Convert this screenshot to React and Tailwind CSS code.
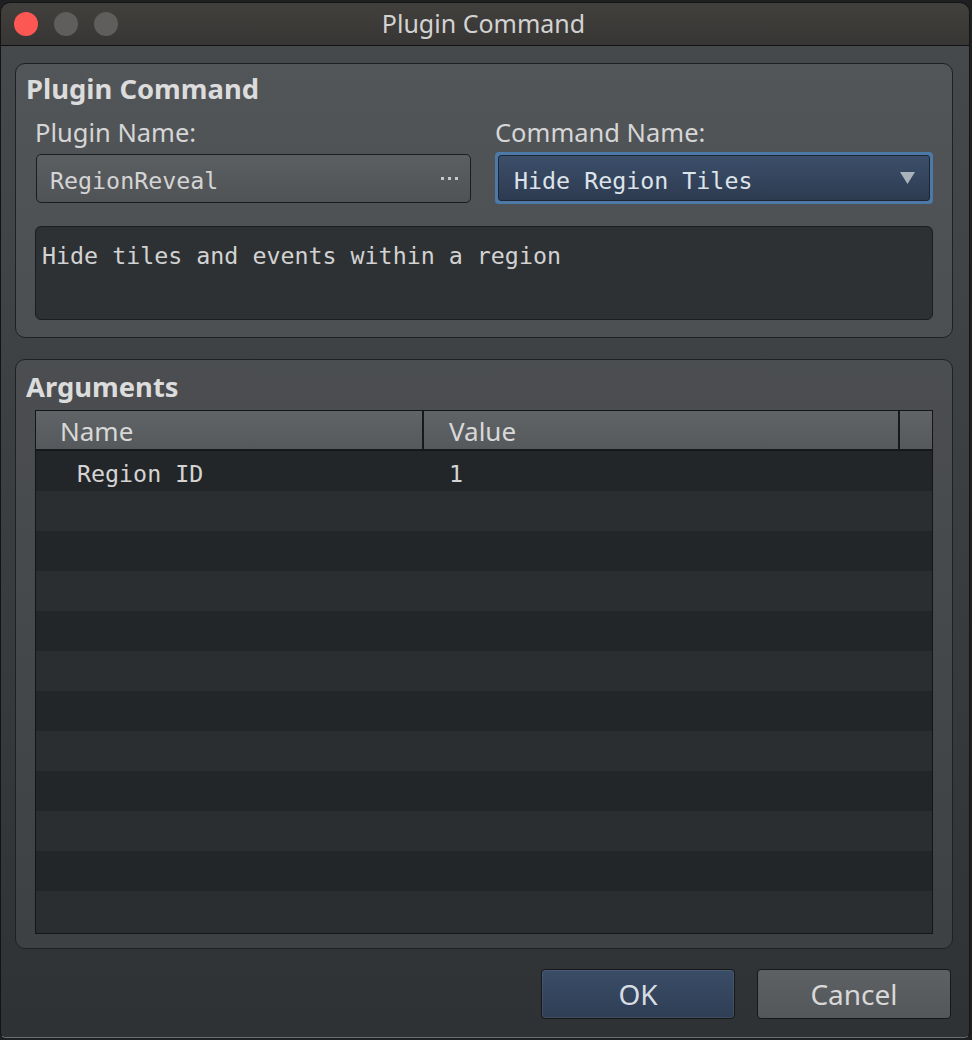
export default function App() {
  const sans = { fontFamily: '"Noto Sans", "Open Sans", sans-serif' };
  const mono = { fontFamily: '"DejaVu Sans Mono", "Liberation Mono", monospace' };
  const rows = Array.from({ length: 12 });
  return (
    <div className="w-[972px] h-[1040px] bg-[#1f2022] pt-[2px] overflow-hidden" style={sans}>
      <div className="w-[970px] h-[1036px] rounded-t-[10px] rounded-b-[6px] border border-[#141414] border-b-[#6a6d70] flex flex-col overflow-hidden">
        {/* Title bar */}
        <div className="relative h-[43px] shrink-0 bg-gradient-to-b from-[#42403d] to-[#383634] border-b border-[#111] flex items-center justify-center">
          <div className="absolute left-[13px] top-[9px] flex gap-[16px]">
            <div className="w-[24px] h-[24px] rounded-full bg-[#fc5753]" />
            <div className="w-[24px] h-[24px] rounded-full bg-[#5f5e5c]" />
            <div className="w-[24px] h-[24px] rounded-full bg-[#5f5e5c]" />
          </div>
          <span className="text-[25px] text-[#d2d2d2] leading-none -mt-[1px] -ml-[3px]">Plugin Command</span>
        </div>
        {/* Body */}
        <div className="flex-1 bg-gradient-to-b from-[#46494c] to-[#2f3235] pl-[14px] pr-[16px] pt-[17px] flex flex-col">
          {/* Group 1 */}
          <div className="h-[275px] rounded-[10px] border border-[#1e2022] bg-white/[0.07] flex flex-col">
            <div className="pl-[10px] pt-[10px] h-[30px] box-content text-[27.4px] font-bold leading-[30px] text-[#dcdcdc]">Plugin Command</div>
            <div className="px-[19px] grid grid-cols-[437px_438px] gap-x-[23px] mt-[15px]">
              <div className="h-[26px] leading-[26px] text-[25.5px] text-[#d6d6d6]">Plugin Name:</div>
              <div className="h-[26px] leading-[26px] text-[25.5px] text-[#d6d6d6]">Command Name:</div>
              <div className="h-[52px] mt-[7px] flex items-center">
                <div className="ml-[1px] w-[435px] h-[49px] rounded-[5px] border border-[#1a1c1e] bg-gradient-to-b from-[#5c5f62] to-[#505356] flex items-center pl-[13px] pr-[12px]">
                  <span className="flex-1 text-[23.3px] text-[#d4d4d4] leading-none pt-[5px]" style={mono}>RegionReveal</span>
                  <span className="flex gap-[4px] items-center">
                    <span className="w-[3px] h-[3px] bg-[#c8c8c8]" />
                    <span className="w-[3px] h-[3px] bg-[#c8c8c8]" />
                    <span className="w-[3px] h-[3px] bg-[#c8c8c8]" />
                  </span>
                </div>
              </div>
              <div className="h-[52px] mt-[7px] rounded-[4px] bg-[#4d79a9] p-[3px]">
                <div className="w-full h-full rounded-[3px] border border-[#1d2633] bg-gradient-to-b from-[#3c4f6a] to-[#2d3b50] flex items-center pl-[15px] pr-[14px]">
                  <span className="flex-1 text-[23.3px] text-[#dde3ea] leading-none pt-[5px]" style={mono}>Hide Region Tiles</span>
                  <svg width="15" height="12" viewBox="0 0 15 12">
                    <polygon points="0,0 15,0 7.5,12" fill="#aab2bc" />
                  </svg>
                </div>
              </div>
            </div>
            <div className="mx-[19px] mt-[22px] h-[94px] rounded-[6px] border border-[#1b1d1f] bg-[#2e3134] pl-[6px] pt-[15px]">
              <div className="text-[23.3px] leading-[28px] text-[#d2d2d2]" style={mono}>Hide tiles and events within a region</div>
            </div>
          </div>
          {/* Group 2 */}
          <div className="mt-[21px] h-[590px] rounded-[10px] border border-[#1e2022] bg-white/[0.065] flex flex-col">
            <div className="pl-[10px] pt-[12px] h-[30px] box-content text-[27.4px] font-bold leading-[30px] text-[#dcdcdc]">Arguments</div>
            <div className="mx-[19px] mt-[8px] h-[524px] border border-[#131517] bg-[#2b2e31] flex flex-col overflow-hidden">
              <div className="h-[40px] shrink-0 flex bg-gradient-to-b from-[#606467] to-[#56595c] border-b-[2px] border-[#16181a] text-[26px] text-[#d8d8d8]">
                <div className="w-[388px] border-r-[2px] border-[#16181a] pl-[24px] leading-[40px]">Name</div>
                <div className="w-[476px] border-r-[2px] border-[#16181a] pl-[25px] leading-[40px]">Value</div>
                <div className="flex-1" />
              </div>
              {rows.map((_, i) => (
                <div key={i} className={`h-[40px] shrink-0 flex items-center ${i % 2 === 0 ? 'bg-[#232629]' : 'bg-[#2b2e31]'}`}>
                  {i === 0 && (
                    <>
                      <div className="w-[388px] pl-[41px] text-[23.3px] text-[#d4d4d4] pt-[6px] leading-none" style={mono}>Region ID</div>
                      <div className="pl-[25px] text-[23.3px] text-[#d4d4d4] pt-[6px] leading-none" style={mono}>1</div>
                    </>
                  )}
                </div>
              ))}
            </div>
          </div>
          {/* Buttons */}
          <div className="mt-[20px] flex justify-end gap-[22px] pr-[2px]">
            <button className="w-[194px] h-[50px] rounded-[4px] border border-[#16181a] bg-gradient-to-b from-[#3a4d67] to-[#2f3e55] shadow-[inset_0_0_0_1px_rgba(255,255,255,0.08)] text-[28px] leading-none text-[#d8dde3]">OK</button>
            <button className="w-[194px] h-[50px] rounded-[4px] border border-[#16181a] bg-gradient-to-b from-[#5e6164] to-[#54575a] text-[28px] leading-none text-[#d8d8d8]">Cancel</button>
          </div>
        </div>
      </div>
    </div>
  );
}
